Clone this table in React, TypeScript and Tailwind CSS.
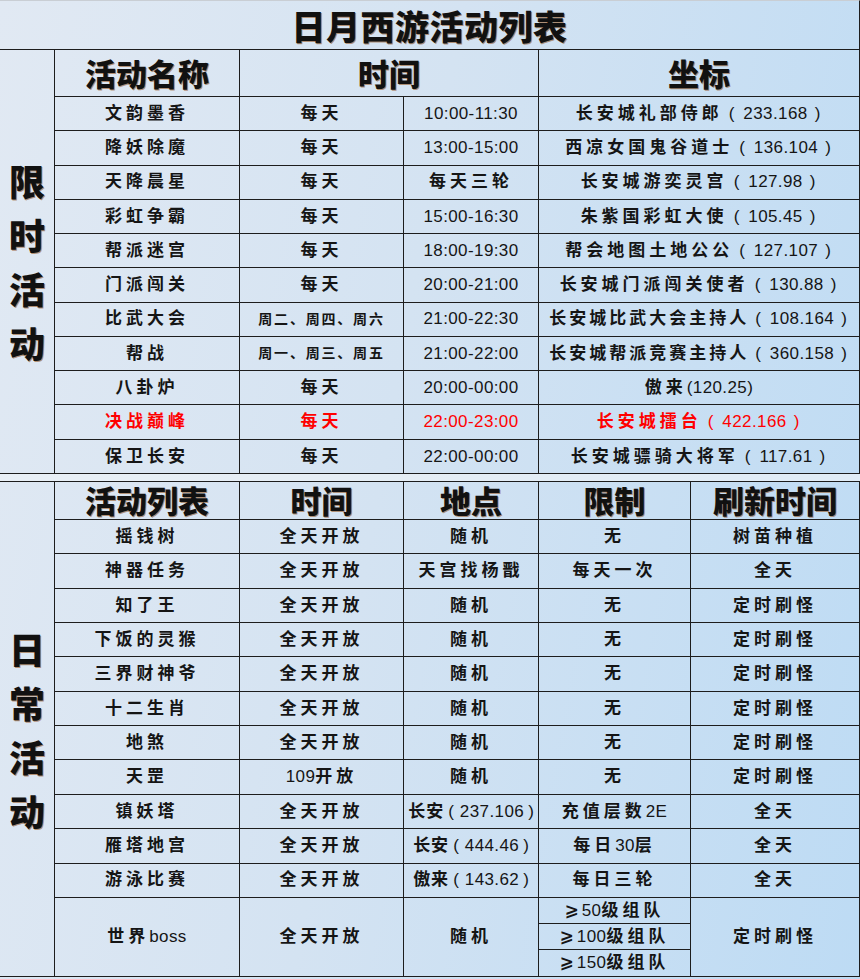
import React from 'react';
import clsx from 'clsx';

const CJK = /[\u2E80-\u9FFF\uFF00-\uFFEF\u3000-\u303F]/;

type Sp = 'n' | 'm' | 't';
const cjkSp: Record<Sp, string> = {
  n: 'tracking-[4px]',
  m: 'tracking-[3px]',
  t: 'tracking-[1px]',
};

// CJK runs get wide spacing, latin/digits stay tight; full-width parens drawn as padded ascii parens
function Txt({ s, sp = 'n' }: { s: string; sp?: Sp }) {
  const parts: { t: string; k: 'c' | 'l' | 'o' | 'x' }[] = [];
  for (const ch of s) {
    const k = ch === '（' ? 'o' : ch === '）' ? 'x' : CJK.test(ch) ? 'c' : 'l';
    const last = parts[parts.length - 1];
    if (last && last.k === k && (k === 'c' || k === 'l')) last.t += ch;
    else parts.push({ t: ch, k });
  }
  return (
    <>
      {parts.map((p, i) => {
        if (p.k === 'o')
          return (
            <span key={i} className={clsx(sp === 't' ? 'ml-[4px] mr-[6px]' : 'ml-[6px] mr-[9px]')}>
              (
            </span>
          );
        if (p.k === 'x')
          return (
            <span key={i} className={clsx(sp === 't' ? 'ml-[4px]' : 'ml-[7px] mr-[2px]')}>
              )
            </span>
          );
        return (
          <span
            key={i}
            className={p.k === 'c' ? clsx('font-semibold', cjkSp[sp]) : 'tracking-[0.4px]'}
          >
            {p.t}
          </span>
        );
      })}
    </>
  );
}

const line = 'border-r border-b border-[#1d1d1d]';
const headText =
  "font-['Noto_Sans_CJK_SC',sans-serif] font-black text-[31px] text-[#111] [text-shadow:1px_1px_0_rgba(140,70,10,0.55)]";

const Cell: React.FC<{ className?: string; children?: React.ReactNode }> = ({
  className,
  children,
}) => (
  <div className={clsx('flex items-center justify-center whitespace-nowrap', line, className)}>
    {children}
  </div>
);

const Label: React.FC<{ chars: string; className?: string }> = ({ chars, className }) => (
  <div
    className={clsx(
      'flex flex-col items-center justify-center border-r border-b border-[#1d1d1d]',
      className
    )}
  >
    {chars.split('').map((c) => (
      <span
        key={c}
        className="font-['Noto_Sans_CJK_SC',sans-serif] font-black text-[36px] leading-[54px] text-[#111] [text-shadow:1px_1px_0_rgba(140,70,10,0.55)]"
      >
        {c}
      </span>
    ))}
  </div>
);

type Row1 = { name: string; day: string; time: string; pos: string; red?: boolean };

const limited: Row1[] = [
  { name: '文韵墨香', day: '每天', time: '10:00-11:30', pos: '长安城礼部侍郎（233.168）' },
  { name: '降妖除魔', day: '每天', time: '13:00-15:00', pos: '西凉女国鬼谷道士（136.104）' },
  { name: '天降晨星', day: '每天', time: '每天三轮', pos: '长安城游奕灵宫（127.98）' },
  { name: '彩虹争霸', day: '每天', time: '15:00-16:30', pos: '朱紫国彩虹大使（105.45）' },
  { name: '帮派迷宫', day: '每天', time: '18:00-19:30', pos: '帮会地图土地公公（127.107）' },
  { name: '门派闯关', day: '每天', time: '20:00-21:00', pos: '长安城门派闯关使者（130.88）' },
  { name: '比武大会', day: '周二、周四、周六', time: '21:00-22:30', pos: '长安城比武大会主持人（108.164）' },
  { name: '帮战', day: '周一、周三、周五', time: '21:00-22:00', pos: '长安城帮派竞赛主持人（360.158）' },
  { name: '八卦炉', day: '每天', time: '20:00-00:00', pos: '傲来(120.25)' },
  { name: '决战巅峰', day: '每天', time: '22:00-23:00', pos: '长安城擂台（422.166）', red: true },
  { name: '保卫长安', day: '每天', time: '22:00-00:00', pos: '长安城骠骑大将军（117.61）' },
];

const daily: string[][] = [
  ['摇钱树', '全天开放', '随机', '无', '树苗种植'],
  ['神器任务', '全天开放', '天宫找杨戬', '每天一次', '全天'],
  ['知了王', '全天开放', '随机', '无', '定时刷怪'],
  ['下饭的灵猴', '全天开放', '随机', '无', '定时刷怪'],
  ['三界财神爷', '全天开放', '随机', '无', '定时刷怪'],
  ['十二生肖', '全天开放', '随机', '无', '定时刷怪'],
  ['地煞', '全天开放', '随机', '无', '定时刷怪'],
  ['天罡', '109开放', '随机', '无', '定时刷怪'],
  ['镇妖塔', '全天开放', '长安（237.106）', '充值层数2E', '全天'],
  ['雁塔地宫', '全天开放', '长安（444.46）', '每日30层', '全天'],
  ['游泳比赛', '全天开放', '傲来（143.62）', '每日三轮', '全天'],
];

const Ge = () => <span className="font-['DejaVu_Sans',sans-serif] font-bold mr-[3px]">⩾</span>;

export default function App() {
  return (
    <div className="w-[860px] h-[979px] bg-[linear-gradient(100deg,#e1e9f3_0%,#d4e3f2_45%,#bddbf4_100%)] font-['Liberation_Sans','Noto_Sans_CJK_SC',sans-serif] text-[17px] text-[#151515]">
      <div className="h-[50px] flex items-center justify-center border-t border-t-[#c9ced4] border-b border-r border-b-[#1d1d1d] border-r-[#1d1d1d]">
        <span className="font-['Noto_Sans_CJK_SC',sans-serif] font-black text-[34px] tracking-[0.5px] text-[#111] [text-shadow:1px_1px_0_rgba(140,70,10,0.55)]">
          日月西游活动列表
        </span>
      </div>

      <div className="grid grid-cols-[55px_185px_164px_135px_321px] grid-rows-[47px_repeat(11,34.27px)]">
        <Label chars="限时活动" className="row-span-12" />
        <Cell className={headText}>活动名称</Cell>
        <Cell className={clsx('col-span-2', headText)}>时间</Cell>
        <Cell className={headText}>坐标</Cell>
        {limited.map((r) => (
          <React.Fragment key={r.name}>
            <Cell className={clsx(r.red && 'text-[#ff0000]')}>
              <Txt s={r.name} />
            </Cell>
            <Cell className={clsx(r.red && 'text-[#ff0000]', r.day.length > 2 && 'text-[14px]')}>
              {r.day.length > 2 ? (
                <span className="font-semibold tracking-[1.8px]">{r.day}</span>
              ) : (
                <Txt s={r.day} />
              )}
            </Cell>
            <Cell className={clsx(r.red && 'text-[#ff0000]')}>
              <Txt s={r.time} />
            </Cell>
            <Cell className={clsx(r.red && 'text-[#ff0000]')}>
              <Txt s={r.pos} sp={r.pos.length > 18 ? 'm' : 'n'} />
            </Cell>
          </React.Fragment>
        ))}
      </div>

      <div className="h-[8px] bg-[#edf2f7]/70 border-b border-[#1d1d1d]" />

      <div className="grid grid-cols-[55px_185px_164px_135px_152px_169px] grid-rows-[38px_repeat(11,34.36px)_repeat(3,26.3px)]">
        <Label chars="日常活动" className="row-span-15" />
        <Cell className={headText}>活动列表</Cell>
        <Cell className={headText}>时间</Cell>
        <Cell className={headText}>地点</Cell>
        <Cell className={headText}>限制</Cell>
        <Cell className={headText}>刷新时间</Cell>
        {daily.map((r) => (
          <React.Fragment key={r[0]}>
            {r.map((c, i) => (
              <Cell key={i}>
                <Txt s={c} sp={i === 2 && c.includes('（') ? 't' : 'n'} />
              </Cell>
            ))}
          </React.Fragment>
        ))}
        <Cell className="row-span-3">
          <Txt s="世界boss" />
        </Cell>
        <Cell className="row-span-3">
          <Txt s="全天开放" />
        </Cell>
        <Cell className="row-span-3">
          <Txt s="随机" />
        </Cell>
        <Cell className="col-start-5 row-start-13">
          <Ge />
          <Txt s="50级组队" />
        </Cell>
        <Cell className="row-span-3 col-start-6 row-start-13">
          <Txt s="定时刷怪" />
        </Cell>
        <Cell className="col-start-5 row-start-14">
          <Ge />
          <Txt s="100级组队" />
        </Cell>
        <Cell className="col-start-5 row-start-15">
          <Ge />
          <Txt s="150级组队" />
        </Cell>
      </div>
    </div>
  );
}
